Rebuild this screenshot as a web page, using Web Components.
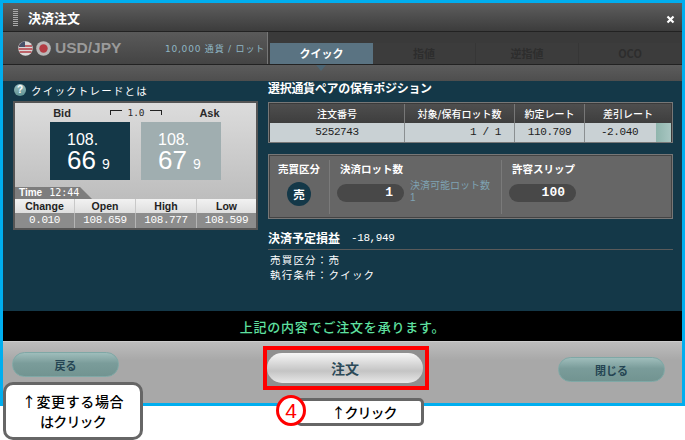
<!DOCTYPE html>
<html lang="ja">
<head>
<meta charset="utf-8">
<title>決済注文</title>
<style>
    html,body{margin:0;padding:0;background:#fff;}
    body{width:685px;height:440px;position:relative;overflow:hidden;font-family:"Noto Sans CJK JP","Liberation Sans",sans-serif;}
</style>
</head>
<body>

<order-window>
    <order-titlebar slot="title">決済注文</order-titlebar>
    <pair-bar slot="pair"></pair-bar>
    <quick-panel slot="left"></quick-panel>
    <position-table slot="right"></position-table>
    <order-form slot="right"></order-form>
    <order-summary slot="right"></order-summary>
    <order-footer slot="footer"></order-footer>
</order-window>

<note-box style="left:3px;top:382px;width:140px;height:58px;"><span style="letter-spacing:.6px">↑変更する場合</span><br><span style="letter-spacing:-.8px">はクリック</span></note-box>
<note-box style="left:296px;top:398px;width:128px;height:28px;border-radius:5px;"><span style="padding-left:8px;letter-spacing:-1px">↑クリック</span></note-box>
<step-mark style="left:276px;top:395px;">4</step-mark>

<script>
function tpl(html){
    const t = document.createElement('template');
    t.innerHTML = html;
    return t;
}
function reg(name, t){
    customElements.define(name, class extends HTMLElement {
        constructor(){
            super();
            this.attachShadow({mode:'open'});
            this.shadowRoot.appendChild(t.content.cloneNode(true));
        }
    });
}

reg('order-window', tpl(`
    <style>
        :host{display:block;width:679px;height:400px;border:3px solid #00aeef;background:#143848;}
        .wrap{display:flex;flex-direction:column;height:100%;}
        .strip{height:16px;background:linear-gradient(#5c5c5c,#4e4e4e);position:relative;flex:none;}
        .strip:after{content:"";position:absolute;left:313px;top:0;border:5px solid transparent;border-top:6px solid #4d6573;border-bottom:0;}
        .body{flex:1;display:grid;grid-template-columns:245px 405px;column-gap:10px;padding:0 9px 0 10px;}
        .msg{height:30px;flex:none;background:#000;color:#5fe0a0;font-size:13px;font-weight:500;line-height:32px;text-align:center;letter-spacing:.8px;}
        .col{display:flex;flex-direction:column;}
    </style>
    <div class="wrap">
        <slot name="title"></slot>
        <slot name="pair"></slot>
        <div class="strip"></div>
        <div class="body">
            <div class="col"><slot name="left"></slot></div>
            <div class="col"><slot name="right"></slot></div>
        </div>
        <div class="msg">上記の内容でご注文を承ります。</div>
        <slot name="footer"></slot>
    </div>
`));

reg('order-titlebar', tpl(`
    <style>
        :host{display:flex;align-items:center;flex:none;height:28px;background:linear-gradient(#5e5e5e,#3c3c3c);border-bottom:1px solid #222;color:#fff;font-size:13px;font-weight:700;position:relative;}
        .grip{width:5px;height:17px;margin:0 10px 0 10px;background:repeating-linear-gradient(#aaa 0 1px,transparent 1px 2px);}
        .x{position:absolute;right:6px;top:11px;width:11px;height:11px;}
    </style>
    <span class="grip"></span><slot></slot>
    <svg class="x" viewBox="0 0 11 11"><path d="M2.5 2.5l6 6M8.500 2.500l-6 6" stroke="#fff" stroke-width="2.200"/></svg>
`));

reg('pair-bar', tpl(`
    <style>
        :host{display:flex;flex:none;background:#3a3a3a;border-bottom:1px solid #222;box-sizing:border-box;height:33px;}
        .sym{width:265px;box-sizing:border-box;display:flex;align-items:center;padding-left:15px;background:linear-gradient(#5a5a5a,#444);border-right:1px solid #777;}
        .sym svg{width:15px;height:15px;margin-right:3px;}
        .sym b{font:700 15.500px "Liberation Sans",sans-serif;color:#9a9a9a;margin:0 0 0 1px;}
        .lot{margin-left:auto;padding-right:2px;font-size:9px;color:#8fb6c4;letter-spacing:.8px;font-family:"DejaVu Sans","Noto Sans CJK JP",sans-serif;}
        .tabs{flex:1;display:flex;align-items:flex-end;padding-left:2px;}
        .tab{flex:0 0 103px;height:21px;line-height:21px;text-align:center;font-size:11px;font-weight:700;color:#2d2d2d;background:#3c3c3c;border-right:1px solid #363636;box-sizing:border-box;}
        .on{color:#fff;background:#5a7382;border:0;}
    </style>
    <div class="sym">
        <svg viewBox="0 0 15 15"><circle cx="7.500" cy="7.500" r="7.300" fill="#d9d9d9"/><path d="M1 5h13M.5 8h14M1.500 11h12" stroke="#b33c44" stroke-width="1.500"/><path d="M1.500 4A7 7 0 0 1 7 .5V6H1z" fill="#47506a"/></svg>
        <svg viewBox="0 0 15 15"><circle cx="7.500" cy="7.500" r="7.300" fill="#b8b8b8"/><circle cx="7.500" cy="7.500" r="4.200" fill="#b33c44"/></svg>
        <b>USD/JPY</b>
        <span class="lot">10,000 通貨 / ロット</span>
    </div>
    <div class="tabs">
        <div class="tab on">クイック</div><div class="tab">指値</div><div class="tab">逆指値</div><div class="tab">OCO</div>
    </div>
`));

reg('price-box', tpl(`
    <style>
        :host{display:block;width:80px;height:58px;box-sizing:border-box;padding:10px 0 0 17px;color:#fff;font-family:"Liberation Sans",sans-serif;background:var(--bg);}
        .a{font-size:16px;line-height:16px;}
        .b{font-size:26px;line-height:24px;margin-top:0;}
        .c{font-size:14px;margin-left:6px;}
    </style>
    <div class="a"><slot name="big"></slot></div>
    <div class="b"><slot name="pips"></slot><span class="c"><slot name="tail"></slot></span></div>
`));

reg('quick-panel', tpl(`
    <style>
        :host{display:block;}
        .help{height:20px;display:flex;align-items:center;gap:5px;font-size:10.500px;letter-spacing:1.200px;color:#fff;padding-left:1px;margin-top:-1px;margin-bottom:1px;}
        .q{width:12px;height:12px;border-radius:50%;background:linear-gradient(#9cbfbf,#5f9494);color:#fff;font:700 10px/12px "Liberation Sans",sans-serif;text-align:center;letter-spacing:0;}
        .box{height:129px;box-sizing:border-box;border:2px solid #555;background:linear-gradient(#dcdcdc,#b4b4b4);display:flex;flex-direction:column;}
        .heads{display:grid;grid-template-columns:94px 54px 1fr;height:19px;align-items:center;color:#2a2a2a;font:700 11px "Liberation Sans",sans-serif;text-align:center;}
        .step{font:400 9.500px "DejaVu Sans Mono",monospace;position:relative;white-space:nowrap;justify-self:center;}
        .step:before,.step:after{content:"";position:absolute;top:3px;width:11px;height:4px;border-top:1px solid #222;}
        .step:before{left:-17px;border-left:1px solid #222;}
        .step:after{right:-17px;border-right:1px solid #222;}
        .prices{display:flex;gap:11px;padding-left:35px;}
        .time{margin-top:7px;width:73px;height:12px;background:#7d7d7d;clip-path:polygon(0 0,65px 0,100% 100%,0 100%);color:#fff;font:700 10px/12px "Liberation Sans",sans-serif;padding-left:4px;}
        .time i{font:400 10px "DejaVu Sans Mono",monospace;margin-left:7px;}
        .stats{display:grid;grid-template-columns:60px 61px 61px 1fr;flex:1;}
        .stats div{text-align:center;}
        .th{height:14px;background:linear-gradient(#f2f2f2,#dedede);font:700 10.500px/14px "Liberation Sans",sans-serif;color:#222;border-right:1px solid #c8c8c8;}
        .td{background:#8c8c8c;color:#fff;font:400 11px/15px "Liberation Mono",monospace;border-right:1px solid #b4b4b4;letter-spacing:-.4px;}
        .stats div:nth-child(4n){border-right:0;}
    </style>
    <div class="help"><span class="q">?</span>クイックトレードとは</div>
    <div class="box">
        <div class="heads"><span>Bid</span><span class="step">1.0</span><span>Ask</span></div>
        <div class="prices">
            <price-box style="--bg:#143848"><span slot="big">108.</span><span slot="pips">66</span><span slot="tail">9</span></price-box>
            <price-box style="--bg:#a0aeb0"><span slot="big">108.</span><span slot="pips">67</span><span slot="tail">9</span></price-box>
        </div>
        <div class="time">Time<i>12:44</i></div>
        <div class="stats">
            <div class="th">Change</div><div class="th">Open</div><div class="th">High</div><div class="th">Low</div>
            <div class="td">0.010</div><div class="td">108.659</div><div class="td">108.777</div><div class="td">108.599</div>
        </div>
    </div>
`));

reg('position-table', tpl(`
    <style>
        :host{display:block;}
        h3{margin:0;height:21px;font-size:12px;line-height:14px;font-weight:700;color:#fff;letter-spacing:-.3px;}
        .t{height:41px;box-sizing:border-box;border:1px solid #777;padding:1px;background:#3a3a3a;display:grid;grid-template-columns:135px 110px 70px 1fr;grid-template-rows:19px 1fr;}
        .h{background:linear-gradient(#4e4e4e,#3e3e3e);color:#fff;font-size:10px;font-weight:500;line-height:19px;text-align:center;border-right:1px solid #777;}
        .h:nth-child(4){border:0;}
        .d{background:#c9d1d4;color:#222;font:400 11px/19px "Liberation Mono",monospace;letter-spacing:-.4px;text-align:center;border-right:1px solid #8a8f91;}
        .r{text-align:right;padding-right:13px;}
        .last{border:0;display:flex;justify-content:flex-end;}
        .last span{flex:1;text-align:center;padding-right:2px;}
        .last i{width:15px;background:linear-gradient(90deg,#8fb5ad,#a9c6c2);}
    </style>
    <h3>選択通貨ペアの保有ポジション</h3>
    <div class="t">
        <div class="h">注文番号</div><div class="h">対象/保有ロット数</div><div class="h">約定レート</div><div class="h">差引レート</div>
        <div class="d">5252743</div><div class="d r">1 / 1</div><div class="d">110.709</div><div class="d last"><span>-2.040</span><i></i></div>
    </div>
`));

reg('order-form', tpl(`
    <style>
        :host{display:grid;grid-template-columns:61px 172px 1fr;height:65px;margin-top:11px;box-sizing:border-box;border:1px solid #777;background:#666;box-shadow:inset 0 0 0 1px #444;color:#fff;font-size:10.500px;font-weight:700;padding:5px 0;}
        .c{padding:0 0 0 10px;border-right:1px solid #7a7a7a;height:54px;box-sizing:border-box;}
        .c:last-child{border:0;}
        .s{text-align:center;padding:0;}
        .l{line-height:14px;display:block;padding-top:2px;}
        .round{width:24px;height:24px;border-radius:50%;background:#143848;margin:6px auto 0;text-align:center;line-height:24px;font-size:11.500px;}
        .row{display:flex;gap:6px;margin:8px 0 0 -3px;}
        .in{width:67px;height:18px;border-radius:9px;background:#484848;text-align:right;padding-right:11px;box-sizing:border-box;font:700 13px/18px "Liberation Mono",monospace;}
        .note{color:#7fa3b3;font-weight:400;font-size:10px;line-height:12px;white-space:nowrap;margin-top:-5px;}
        .note div+div{font-family:"Liberation Sans",sans-serif;line-height:14px;}
    </style>
    <div class="c s"><span class="l">売買区分</span><div class="round">売</div></div>
    <div class="c"><span class="l">決済ロット数</span><div class="row"><div class="in">1</div><div class="note"><div>決済可能ロット数</div><div>1</div></div></div></div>
    <div class="c"><span class="l">許容スリップ</span><div class="row"><div class="in">100</div></div></div>
`));

reg('order-summary', tpl(`
    <style>
        :host{display:block;margin-top:7px;color:#fff;font-size:10.500px;}
        .pl{height:23px;display:flex;align-items:center;gap:11px;border-bottom:1px solid #5a5a5a;}
        .pl b{font-size:12px;}
        .pl span{font:400 11px "Liberation Mono",monospace;letter-spacing:-.4px;}
        .lines{padding:2px 0 0 2px;line-height:15px;letter-spacing:1.200px;}
    </style>
    <div class="pl"><b>決済予定損益</b><span>-18,949</span></div>
    <div class="lines">売買区分：売<br>執行条件：クイック</div>
`));

reg('pill-button', tpl(`
    <style>
        :host{display:block;width:107px;height:25px;border-radius:13px;box-sizing:border-box;border:1px solid #7fa8a6;background:linear-gradient(#9fbdbb,#7a9c9a 45%,#729491);color:#254553;font-size:11px;font-weight:700;line-height:24px;text-align:center;}
    </style>
    <slot></slot>
`));

reg('order-footer', tpl(`
    <style>
        :host{display:flex;justify-content:space-between;flex:none;height:62px;box-sizing:border-box;padding:10px 17px 0 9px;border-top:1px solid #ccc;background:linear-gradient(#bdbdbd,#a8a8a8 30%);position:relative;}
        .main{position:absolute;left:260px;top:4px;width:166px;height:44px;box-sizing:border-box;border:4px solid #f00;padding-top:3px;background:#8f8f8f;}
        .btn{margin-right:2px;height:30px;border-radius:15px;background:linear-gradient(#f6f6f6,#c4c4c4 60%,#e8e8e8);color:#2c4a58;font-size:14px;font-weight:700;line-height:30px;text-align:center;}
        .low{margin-top:5px;}
    </style>
    <pill-button>戻る</pill-button>
    <div class="main"><div class="btn">注文</div></div>
    <pill-button class="low">閉じる</pill-button>
`));

reg('note-box', tpl(`
    <style>
        :host{position:absolute;display:flex;align-items:center;justify-content:center;box-sizing:border-box;border:3px solid #666;border-radius:10px;background:#fff;color:#000;font-size:14px;line-height:20px;text-align:center;font-weight:500;}
    </style>
    <div><slot></slot></div>
`));

reg('step-mark', tpl(`
    <style>
        :host{position:absolute;width:30px;height:31px;box-sizing:border-box;border:3px solid #f00;border-radius:50%;background:#fff;color:#f00;font:400 21px/25px "Liberation Sans",sans-serif;text-align:center;}
    </style>
    <slot></slot>
`));
</script>
</body>
</html>
